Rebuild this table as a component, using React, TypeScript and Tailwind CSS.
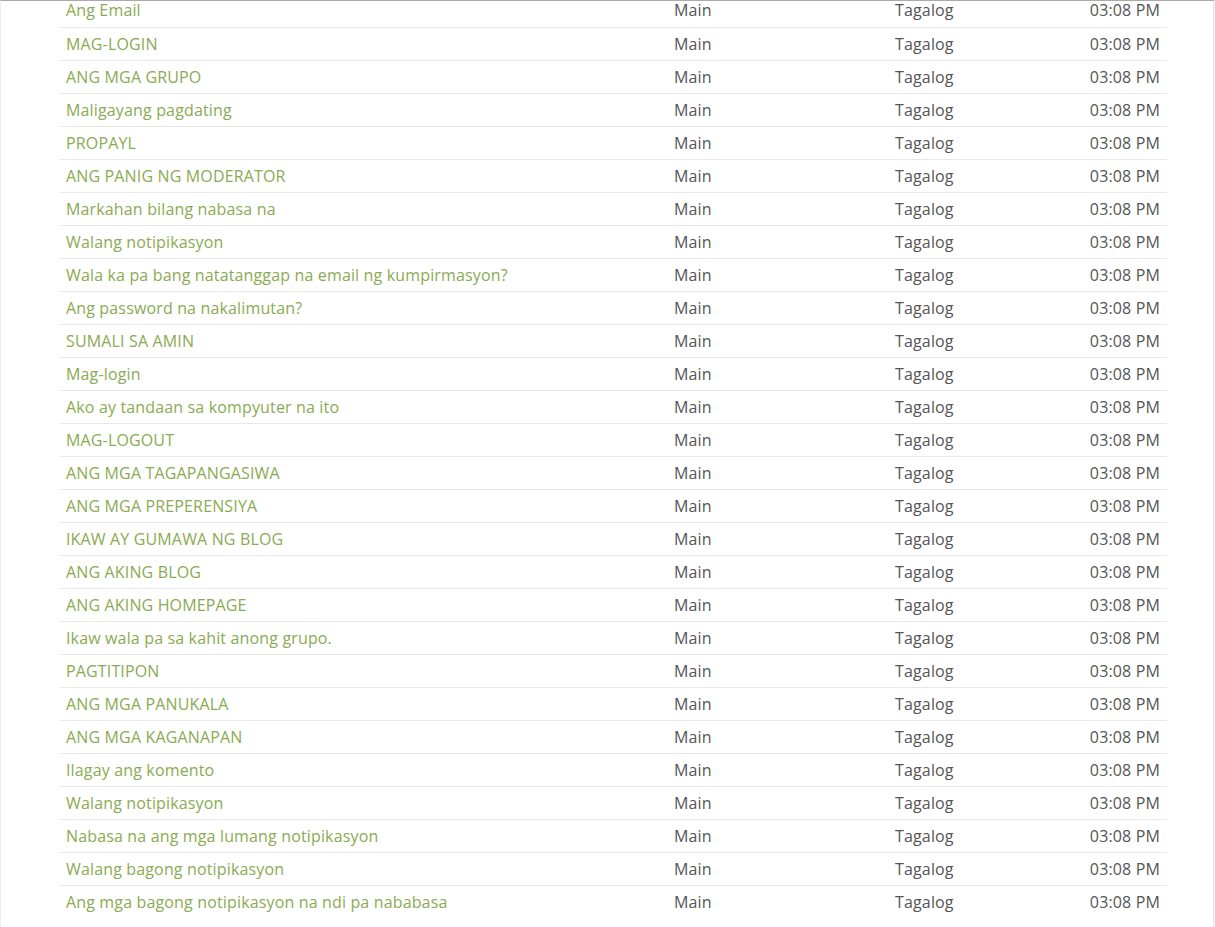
const rows = [
  "Ang Email",
  "MAG-LOGIN",
  "ANG MGA GRUPO",
  "Maligayang pagdating",
  "PROPAYL",
  "ANG PANIG NG MODERATOR",
  "Markahan bilang nabasa na",
  "Walang notipikasyon",
  "Wala ka pa bang natatanggap na email ng kumpirmasyon?",
  "Ang password na nakalimutan?",
  "SUMALI SA AMIN",
  "Mag-login",
  "Ako ay tandaan sa kompyuter na ito",
  "MAG-LOGOUT",
  "ANG MGA TAGAPANGASIWA",
  "ANG MGA PREPERENSIYA",
  "IKAW AY GUMAWA NG BLOG",
  "ANG AKING BLOG",
  "ANG AKING HOMEPAGE",
  "Ikaw wala pa sa kahit anong grupo.",
  "PAGTITIPON",
  "ANG MGA PANUKALA",
  "ANG MGA KAGANAPAN",
  "Ilagay ang komento",
  "Walang notipikasyon",
  "Nabasa na ang mga lumang notipikasyon",
  "Walang bagong notipikasyon",
  "Ang mga bagong notipikasyon na ndi pa nababasa",
];

const App = () => {
  return (
    <div
      className="h-[927px] overflow-hidden bg-white border-t border-t-[#aaaaaa] border-l border-l-[#eeeeee] border-r-2 border-r-[#eeeeee]"
      style={{ fontFamily: '"Open Sans", "Noto Sans", sans-serif' }}
    >
      <table className="ml-[59px] w-[1107px] -mt-[7px] text-[16px] tracking-[0.15px] text-[#555555] border-collapse">
        <tbody>
          {rows.map((r, i) => (
            <tr
              key={i}
              className={i < rows.length - 1 ? "h-[33px] border-b border-[#e8e8e8]" : "h-[33px]"}
            >
              <td className="w-[608px] px-[6px] py-0 text-[#8aab52] leading-[22px]">
                <a href="#">{r}</a>
              </td>
              <td className="w-[221px] px-[6px] py-0">Main</td>
              <td className="px-[6px] py-0">Tagalog</td>
              <td className="px-[7px] py-0 text-right">03:08 PM</td>
            </tr>
          ))}
        </tbody>
      </table>
    </div>
  );
};

export default App;
